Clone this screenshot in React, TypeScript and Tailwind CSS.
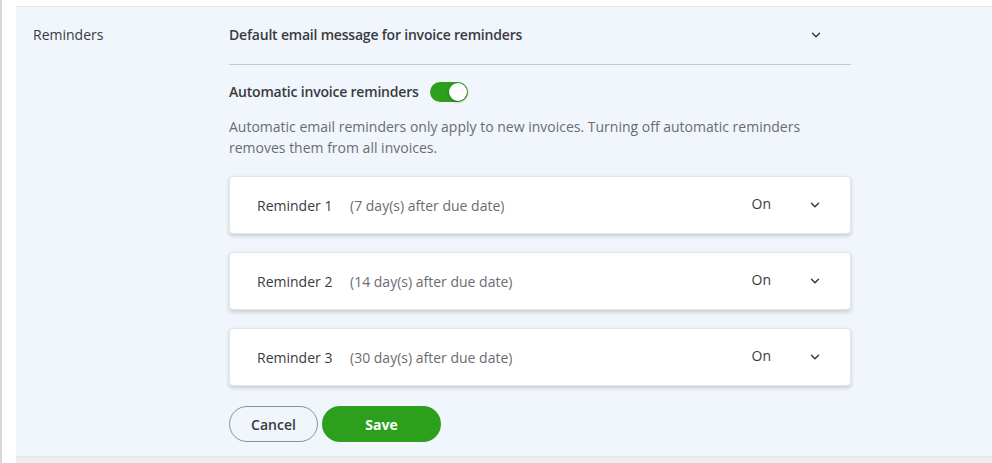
import { ChevronDown } from 'lucide-react';

const reminders = [
  { id: 1, days: 7 },
  { id: 2, days: 14 },
  { id: 3, days: 30 },
];

export default function App() {
  return (
    <div
      className="w-[992px] h-[463px] bg-white border-l-2 border-[#d4d7dc] pl-[14px] pt-[6px] flex flex-col text-[#393a3d]"
      style={{ fontFamily: '"Open Sans", Lato, sans-serif' }}
    >
      <div className="flex-1 bg-[#f1f6fd] border-t border-[#e3e8ef] flex pt-[17px]">
        <div className="w-[213px] pl-[17px] text-[14px] text-[#393a3d]">Reminders</div>
        <div className="w-[622px]">
          <div className="flex items-start justify-between border-b border-[#c6c9ce] h-[41px]">
            <span className="text-[14px] font-semibold tracking-[-0.2px]">Default email message for invoice reminders</span>
            <ChevronDown className="w-[14px] h-[14px] mr-[28px] mt-[4px]" strokeWidth={2.5} />
          </div>
          <div className="flex items-center gap-[11px] mt-[16px]">
            <span className="text-[14px] font-semibold tracking-[-0.2px]">Automatic invoice reminders</span>
            <span className="w-[38px] h-[20px] rounded-full bg-[#2ca01c] relative">
              <span className="absolute right-[1px] top-[1px] w-[18px] h-[18px] rounded-full bg-white shadow-[0_1px_3px_rgba(0,0,0,0.35)]" />
            </span>
          </div>
          <p className="text-[14px] leading-[21px] text-[#6b6c72] mt-[14px]">
            Automatic email reminders only apply to new invoices. Turning off automatic reminders
            <br />
            removes them from all invoices.
          </p>
          <div className="flex flex-col gap-[18px] mt-[18px]">
            {reminders.map(r => (
              <div
                key={r.id}
                className="h-[58px] bg-white rounded-[4px] border border-[#e3e5e8] shadow-[0_2px_4px_rgba(0,0,0,0.18)] flex items-center pl-[27px] pr-[28px] text-[14px]"
              >
                <span className="text-[#393a3d] w-[93px]">Reminder {r.id}</span>
                <span className="text-[#6b6c72]">({r.days} day(s) after due date)</span>
                <span className="ml-auto text-[#393a3d] mb-[4px]">On</span>
                <ChevronDown className="w-[14px] h-[14px] ml-[37px]" strokeWidth={2.5} />
              </div>
            ))}
          </div>
          <div className="flex gap-[4px] mt-[20px]">
            <button className="w-[89px] h-[36px] rounded-full border border-[#8d9096] text-[14px] font-semibold text-[#393a3d] bg-transparent">
              Cancel
            </button>
            <button className="w-[119px] h-[36px] rounded-full bg-[#2ca01c] text-white text-[14px] font-bold">
              Save
            </button>
          </div>
        </div>
      </div>
      <div className="h-[7px] bg-[#eceef1] border-t border-[#e3e5e8]" />
    </div>
  );
}
